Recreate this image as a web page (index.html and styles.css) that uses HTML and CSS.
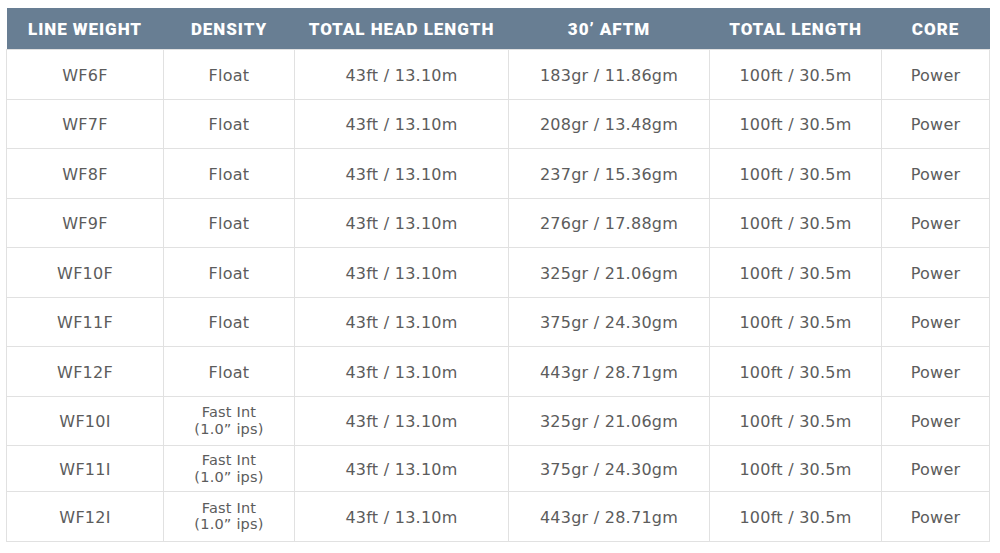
FILE: index.html
```html
<!DOCTYPE html>
<html>
<head>
<meta charset="utf-8">
<link rel="stylesheet" href="styles.css">
</head>
<body>
<table class="spec">
  <colgroup>
    <col class="c1"><col class="c2"><col class="c3"><col class="c4"><col class="c5"><col class="c6">
  </colgroup>
  <thead>
    <tr><th>LINE WEIGHT</th><th>DENSITY</th><th>TOTAL HEAD LENGTH</th><th>30’ AFTM</th><th>TOTAL LENGTH</th><th>CORE</th></tr>
  </thead>
  <tbody>
    <tr><td>WF6F</td><td>Float</td><td>43ft / 13.10m</td><td>183gr / 11.86gm</td><td>100ft / 30.5m</td><td>Power</td></tr>
    <tr><td>WF7F</td><td>Float</td><td>43ft / 13.10m</td><td>208gr / 13.48gm</td><td>100ft / 30.5m</td><td>Power</td></tr>
    <tr><td>WF8F</td><td>Float</td><td>43ft / 13.10m</td><td>237gr / 15.36gm</td><td>100ft / 30.5m</td><td>Power</td></tr>
    <tr><td>WF9F</td><td>Float</td><td>43ft / 13.10m</td><td>276gr / 17.88gm</td><td>100ft / 30.5m</td><td>Power</td></tr>
    <tr><td>WF10F</td><td>Float</td><td>43ft / 13.10m</td><td>325gr / 21.06gm</td><td>100ft / 30.5m</td><td>Power</td></tr>
    <tr><td>WF11F</td><td>Float</td><td>43ft / 13.10m</td><td>375gr / 24.30gm</td><td>100ft / 30.5m</td><td>Power</td></tr>
    <tr><td>WF12F</td><td>Float</td><td>43ft / 13.10m</td><td>443gr / 28.71gm</td><td>100ft / 30.5m</td><td>Power</td></tr>
    <tr><td>WF10I</td><td class="small">Fast Int<br>(1.0” ips)</td><td>43ft / 13.10m</td><td>325gr / 21.06gm</td><td>100ft / 30.5m</td><td>Power</td></tr>
    <tr class="short"><td>WF11I</td><td class="small">Fast Int<br>(1.0” ips)</td><td>43ft / 13.10m</td><td>375gr / 24.30gm</td><td>100ft / 30.5m</td><td>Power</td></tr>
    <tr><td>WF12I</td><td class="small">Fast Int<br>(1.0” ips)</td><td>43ft / 13.10m</td><td>443gr / 28.71gm</td><td>100ft / 30.5m</td><td>Power</td></tr>
  </tbody>
</table>
</body>
</html>
```
FILE: styles.css
```css
html, body {
  margin: 0;
  padding: 0;
  background: #ffffff;
}
body {
  padding: 8px 0 0 6px;
}
.spec {
  border-collapse: collapse;
  table-layout: fixed;
  width: 983px;
  font-family: "DejaVu Sans", Verdana, sans-serif;
  color: #5c5c5c;
}
.c1 { width: 157px; }
.c2 { width: 131px; }
.c3 { width: 214px; }
.c4 { width: 201px; }
.c5 { width: 172px; }
.c6 { width: 108px; }
.spec thead th {
  background: #687e93;
  color: #ffffff;
  height: 41px;
  padding: 0;
  font-family: Roboto, "Liberation Sans", sans-serif;
  font-weight: 900;
  font-size: 17px;
  letter-spacing: 0.95px;
  text-align: center;
  vertical-align: middle;
  border: none;
}
.spec tbody td {
  border: 1px solid #e1e1e1;
  height: 49.5px;
  padding: 3px 0 0;
  box-sizing: border-box;
  text-align: center;
  vertical-align: middle;
  font-size: 16px;
  letter-spacing: 0.25px;
  line-height: 18px;
}
.spec tbody tr.short td {
  height: 46px;
}
.spec tbody td.small {
  padding-top: 0;
  font-size: 14.5px;
  letter-spacing: 0.2px;
  line-height: 16.5px;
}
```
